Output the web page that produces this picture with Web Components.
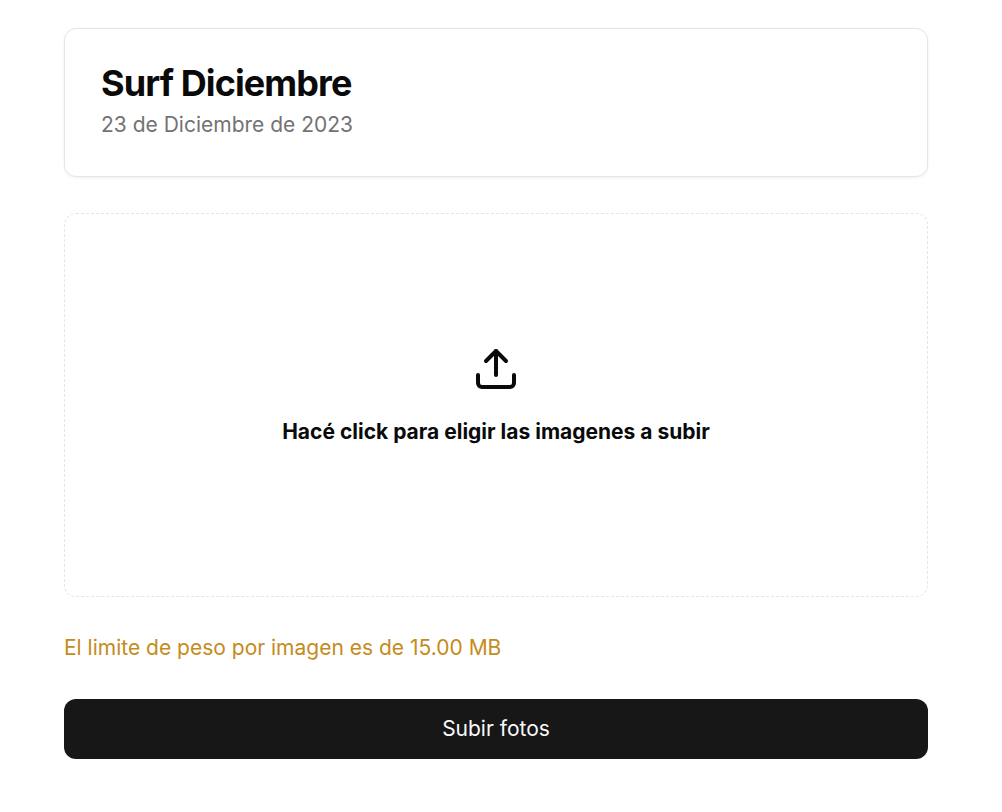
<!DOCTYPE html>
<html lang="es">
<head>
<meta charset="utf-8">
<meta name="viewport" content="width=device-width, initial-scale=1">
<title>Surf Diciembre</title>
<style>
body { margin: 0; background: #fff; color: #0a0a0a; font-family: Inter, "Liberation Sans", sans-serif; font-size: 21px; line-height: 30px; }
</style>
</head>
<body>
<upload-page>
  <album-header>
    <span slot="title">Surf Diciembre</span>
    <span slot="date">23 de Diciembre de 2023</span>
  </album-header>
  <drop-zone>Hacé click para eligir las imagenes a subir</drop-zone>
  <limit-note>El limite de peso por imagen es de 15.00 MB</limit-note>
  <submit-button>Subir fotos</submit-button>
</upload-page>
<script>
const define = (name, html) => customElements.define(name, class extends HTMLElement {
  constructor() {
    super();
    this.attachShadow({ mode: "open" }).innerHTML = html;
  }
});

define("upload-page", `
<style>
:host { display: block; }
main { display: flex; flex-direction: column; gap: 36px; padding: 28px 74px 53px 64px; }
</style>
<main><slot></slot></main>`);

define("album-header", `
<style>
:host { display: block; border: 1px solid #e5e5e5; border-radius: 12px; box-shadow: 0 1px 3px rgba(0,0,0,.06); padding: 36px; }
h1 { margin: 0; font-size: 36px; line-height: 36px; font-weight: 700; letter-spacing: -0.025em; }
p { margin: 9px 0 0; color: #737373; }
</style>
<header><h1><slot name="title"></slot></h1><p><slot name="date"></slot></p></header>`);

define("drop-zone", `
<style>
:host { display: block; position: relative; }
label { display: flex; flex-direction: column; align-items: center; justify-content: center; gap: 24px; box-sizing: border-box; min-height: 384px; padding: 36px 36px 54px; border: 1px dashed #e5e5e5; border-radius: 12px; font-weight: 700; cursor: pointer; text-align: center; }
svg { width: 48px; height: 48px; }
input { position: absolute; inset: 0; width: 100%; height: 100%; opacity: 0; cursor: pointer; }
</style>
<label for="files">
  <svg viewBox="0 0 24 24" fill="none" stroke="currentColor" stroke-width="2" stroke-linecap="round" stroke-linejoin="round" aria-hidden="true"><path d="M21 15v4a2 2 0 0 1-2 2H5a2 2 0 0 1-2-2v-4"/><path d="M17 8l-5-5-5 5"/><path d="M12 3v12"/></svg>
  <span><slot></slot></span>
</label>
<input id="files" type="file" multiple accept="image/*">`);

define("limit-note", `
<style>
:host { display: block; }
p { margin: 0; color: #c58b1b; }
</style>
<p><slot></slot></p>`);

define("submit-button", `
<style>
:host { display: block; }
button { display: block; width: 100%; min-height: 60px; padding: 12px 24px; border: 0; border-radius: 12px; background: #171717; color: #fafafa; font: inherit; cursor: pointer; }
</style>
<button type="button"><slot></slot></button>`);
</script>
</body>
</html>
